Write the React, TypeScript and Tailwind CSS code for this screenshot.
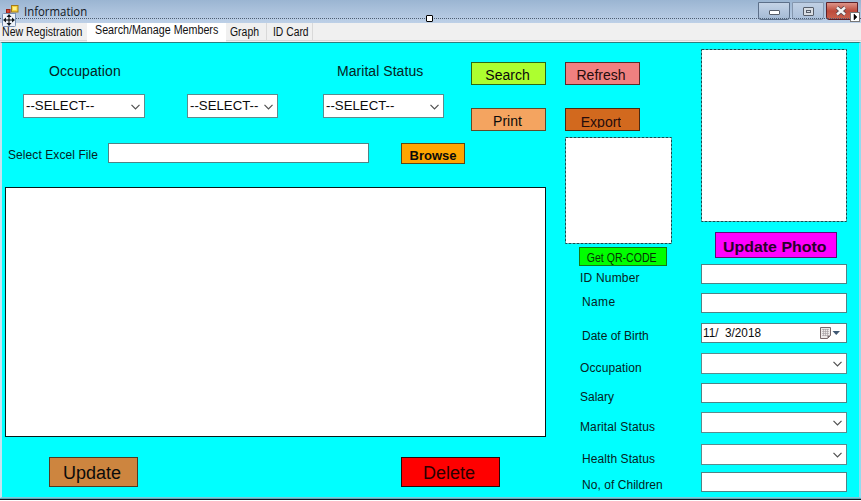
import React from "react";
import clsx from "clsx";

function Chevron({ className }: { className?: string }) {
  return (
    <svg className={clsx("h-[6px] w-[9px] shrink-0", className)} viewBox="0 0 9 6" fill="none" stroke="#505050" strokeWidth="1.2">
      <path d="M0.5 0.8 4.5 4.8 8.5 0.8" />
    </svg>
  );
}

function Combo({ text, className }: { text?: string; className: string }) {
  return (
    <div className={clsx("flex shrink-0 items-center justify-between border border-[#5b8c8e] bg-white", className)}>
      <span className="ml-[2px] w-0 origin-left scale-x-[0.98] text-[13.5px] leading-[20px] whitespace-nowrap">{text}</span>
      <Chevron className="mt-px mr-[4px]" />
    </div>
  );
}

function Button({ text, className, textClass }: { text: string; className: string; textClass?: string }) {
  return (
    <button className={clsx("flex shrink-0 items-center justify-center overflow-hidden border whitespace-nowrap", className)}>
      <span className={textClass}>{text}</span>
    </button>
  );
}

function Field({ className }: { className: string }) {
  return <input className={clsx("block shrink-0 border border-[#4f8486] bg-white outline-none", className)} />;
}

function Label({ text, className }: { text: string; className: string }) {
  return <span className={clsx("block h-[16px] shrink-0 leading-[16px] whitespace-nowrap text-[#062323]", className)}>{text}</span>;
}

function TitleBar() {
  return (
    <header className="relative flex h-[23px] shrink-0 bg-linear-to-b from-[#9bb5d2] to-[#bdd0e7]">
      <svg className="mt-[4px] ml-[5px] h-[14px] w-[14px]" viewBox="0 0 14 14">
        <rect x="6.5" y="1.5" width="6.5" height="6.5" fill="#f8d33c" stroke="#a47a16" />
        <rect x="8" y="3" width="3.5" height="3" fill="#fff08a" />
        <rect x="1.5" y="5.5" width="3.5" height="3.5" fill="#d8432f" stroke="#962217" />
        <rect x="6.5" y="9.5" width="4" height="4" fill="#7d9dd0" stroke="#6683b4" />
      </svg>
      <span className="mt-[4px] ml-[5px] block h-[16px] origin-left scale-x-[0.95] font-['Open_Sans',sans-serif] text-[12px] leading-[16px] text-[#10161e]">Information</span>
      <div className="mr-[3px] ml-auto flex h-[20px] gap-[2px] pt-[2px]">
        <div className="flex h-[18px] w-[32px] items-center justify-center rounded-b-[3px] border border-[#5c6f89] bg-linear-to-b from-[#c4d3e6] via-[#b3c6de] to-[#a4bad4]">
          <span className="mt-[3px] h-[5px] w-[11px] rounded-[1px] border border-[#565d69] bg-white" />
        </div>
        <div className="flex h-[18px] w-[32px] items-center justify-center rounded-b-[3px] border border-[#8597ae] bg-linear-to-b from-[#c0d0e4] to-[#abc0da]">
          <span className="flex h-[9px] w-[11px] items-center justify-center rounded-[1px] border border-[#565d69] bg-[#d8dde3]">
            <span className="h-[3px] w-[5px] border border-[#565d69]" />
          </span>
        </div>
        <div className="flex h-[18px] w-[32px] items-center justify-center rounded-b-[3px] border border-[#5e2027] bg-linear-to-b from-[#dc9489] via-[#bd4a3b] to-[#c9624f]">
          <svg className="mr-[2px] h-[10px] w-[12px]" viewBox="0 0 12 10">
            <path d="M2 1.5 10 8.5M10 1.5 2 8.5" stroke="#59454b" strokeWidth="4.2" />
            <path d="M2 1.5 10 8.5M10 1.5 2 8.5" stroke="#f4f4f4" strokeWidth="2.4" />
          </svg>
        </div>
      </div>
      <div className="absolute top-[18px] left-0 w-full border-t border-dotted border-[#4c5d72]" />
      <div className="absolute top-[15px] left-[426px] size-[7px] rounded-[1px] border border-black bg-white" />
      <svg className="absolute top-[13px] left-[2px] z-10 h-[14px] w-[14px]" viewBox="0 0 14 14">
        <rect x="0.5" y="0.5" width="13" height="13" rx="1" fill="#eef3fa" stroke="#7890b2" />
        <path d="M7 2v10M2 7h10" stroke="#000" />
        <path d="M7 1 4.5 4h5zM7 13 4.5 10h5zM1 7l3-2.5v5zM13 7l-3-2.5v5z" fill="#101820" />
      </svg>
      <svg className="absolute top-[12px] left-[850px] z-10 h-[10px] w-[10px]" viewBox="0 0 10 10">
        <rect x="0.5" y="0.5" width="9" height="9" fill="#fff" stroke="#777" />
        <path d="M4 2 7 5 4 8z" fill="#000" stroke="#000" strokeWidth="0.5" />
      </svg>
    </header>
  );
}

function Tabs() {
  return (
    <nav className="flex h-[19px] shrink-0 bg-[#f0f0f0] text-[12px] leading-[15px] whitespace-nowrap text-[#111]">
      <div className="h-[18px] w-[87px] border-b border-[#d9d9d9] pt-[2px] pl-[2px]">
        <span className="block w-0 origin-left scale-x-[0.88]">New Registration</span>
      </div>
      <div className="h-[19px] w-[139px] bg-white pl-[8px]">
        <span className="block w-0 origin-left scale-x-[0.893]">Search/Manage Members</span>
      </div>
      <div className="h-[18px] w-[41px] border-r border-b border-[#d9d9d9] pt-[2px] pl-[4px]">
        <span className="block w-0 origin-left scale-x-[0.87]">Graph</span>
      </div>
      <div className="h-[18px] w-[46px] border-r border-b border-[#d9d9d9] pt-[2px] pl-[6px]">
        <span className="block w-0 origin-left scale-x-[0.86]">ID Card</span>
      </div>
      <div className="h-[18px] flex-1 border-b border-[#d9d9d9]" />
    </nav>
  );
}

function DashedBox({ className, w, h }: { className: string; w: number; h: number }) {
  return (
    <svg className={clsx("block shrink-0", className)} viewBox={`0 0 ${w} ${h}`}>
      <rect x="0.5" y="0.5" width={w - 1} height={h - 1} fill="#fff" />
      <rect x="0.5" y="0.5" width={w - 1} height={h - 1} fill="none" stroke="#164c4e" strokeDasharray="3 1" />
    </svg>
  );
}

function SearchPanel() {
  return (
    <section className="flex w-[544px] shrink-0 flex-col">
      <div className="flex h-[100px]">
        <div className="w-[469px] pt-[20px]">
          <div className="flex h-[16px] text-[14px]">
            <Label text="Occupation" className="ml-[47px] w-[288px] tracking-[0.1px]" />
            <Label text="Marital Status" className="tracking-[0.05px]" />
          </div>
          <div className="mt-[15px] flex">
            <Combo text="--SELECT--" className="ml-[21px] h-[24px] w-[122px]" />
            <Combo text="--SELECT--" className="ml-[42px] h-[24px] w-[91px]" />
            <Combo text="--SELECT--" className="ml-[45px] h-[24px] w-[121px]" />
          </div>
        </div>
        <div className="flex flex-col gap-[23px] pt-[19px] text-[14px] leading-[16px]">
          <Button text="Search" className="h-[23px] w-[75px] border-[#2e6a14] bg-[#adff2f] pt-[3px] pr-[2px]" />
          <Button text="Print" className="h-[23px] w-[75px] border-[#5f4a2b] bg-[#f4a460] pt-[3px] pr-[2px]" />
        </div>
      </div>
      <div className="flex h-[44px]">
        <Label text="Select Excel File" className="mt-[4px] ml-[6px] w-[100px] text-[12px] tracking-[0.08px]" />
        <Field className="h-[20px] w-[261px]" />
        <Button text="Browse" className="ml-[32px] h-[21px] w-[64px] border-[#5d4813] bg-[#ffa500] pt-[4px] text-[13px] leading-[16px] font-bold" />
      </div>
      <div className="ml-[3px] h-[250px] w-[541px] shrink-0 border border-[#061b1b] bg-white" />
      <div className="mt-[20px] flex text-[18px] leading-[20px]">
        <Button text="Update" className="ml-[47px] h-[30px] w-[89px] border-[#4d3c24] bg-[#cd853f] pt-[2px] pr-[3px]" />
        <Button text="Delete" className="ml-[263px] h-[30px] w-[99px] border-[#2a0808] bg-[#ff0000] pt-[2px] pr-[3px] text-[#2a0000]" />
      </div>
    </section>
  );
}

function MiddleColumn() {
  return (
    <section className="ml-[19px] flex w-[107px] shrink-0 flex-col pt-[19px] text-[12px]">
      <Button text="Refresh" className="h-[23px] w-[75px] border-[#5a2b2b] bg-[#f08080] pt-[3px] pr-[3px] text-[14px] leading-[16px] text-[#260c0c]" />
      <Button text="Export" className="mt-[23px] h-[23px] w-[75px] border-[#4b2a10] bg-[#d2691e] pt-[3px] pr-[3px] text-[14px] leading-[16px] text-[#260c0c]" textClass="h-[14px] overflow-hidden" />
      <DashedBox className="mt-[6px] h-[107px] w-[107px]" w={107} h={107} />
      <Button text="Get QR-CODE" className="mt-[3px] ml-[14px] h-[19px] w-[88px] border-[#147a14] bg-[#00ff00] pt-[3px] pr-[2px] text-[12px] leading-[14px] text-[#063306]" textClass="scale-x-[0.88]" />
      <Label text="ID Number" className="mt-[4px] ml-[15px] tracking-[0.2px]" />
      <Label text="Name" className="mt-[8px] ml-[17px] tracking-[0.35px]" />
      <Label text="Date of Birth" className="mt-[18px] ml-[17px]" />
      <Label text="Occupation" className="mt-[16px] ml-[15px] tracking-[0.1px]" />
      <Label text="Salary" className="mt-[13px] ml-[15px]" />
      <Label text="Marital Status" className="mt-[14px] ml-[15px] tracking-[0.12px]" />
      <Label text="Health Status" className="mt-[16px] ml-[17px] tracking-[0.08px]" />
      <Label text="No, of Children" className="mt-[10px] ml-[17px] tracking-[0.05px]" />
    </section>
  );
}

function DatePicker() {
  return (
    <div className="mt-[10px] flex h-[20px] w-[146px] shrink-0 items-center border border-[#4f8486] bg-white">
      <span className="ml-px w-[117px] text-[12px] leading-[16px] whitespace-pre">
        <span className="inline-block origin-left scale-x-[0.98]">{"11/  3/2018"}</span>
      </span>
      <svg className="h-[12px] w-[22px]" viewBox="0 0 22 12">
        <path d="M0.5 0.5h10v8l-3 3h-7z" fill="#eee9e9" stroke="#77696b" />
        <path d="M2 2.5h7M2 4.5h7M2 6.5h7M2 8.5h5M3.5 2v7M5.5 2v7M7.5 2v7" stroke="#a29ca0" strokeWidth="0.6" />
        <path d="M10.5 8.5h-3v3z" fill="#77696b" />
        <path d="M12.5 4h7.5l-3.75 4z" fill="#3f5873" />
      </svg>
    </div>
  );
}

function DetailsColumn() {
  return (
    <section className="ml-[29px] flex w-[146px] shrink-0 flex-col pt-[6px]">
      <DashedBox className="h-[173px] w-[146px]" w={146} h={173} />
      <Button text="Update Photo" className="mt-[10px] ml-[14px] h-[26px] w-[122px] border-[#5a0f78] bg-[#ff00ff] pt-[3px] pr-[2px] text-[15px] leading-[18px] font-bold text-[#2b002b]" textClass="scale-x-[1.06]" />
      <Field className="mt-[6px] h-[20px] w-[146px]" />
      <Field className="mt-[9px] h-[20px] w-[146px]" />
      <DatePicker />
      <Combo className="mt-[10px] h-[21px] w-[146px]" />
      <Field className="mt-[9px] h-[20px] w-[146px]" />
      <Combo className="mt-[9px] h-[21px] w-[146px]" />
      <Combo className="mt-[11px] h-[21px] w-[146px]" />
      <Field className="mt-[7px] h-[20px] w-[146px]" />
    </section>
  );
}

export default function App() {
  return (
    <div className="flex h-[501px] w-[861px] flex-col overflow-hidden bg-white font-['Liberation_Sans',Arial,sans-serif] text-[#0b0b0b]">
      <TitleBar />
      <Tabs />
      <main className="flex h-[456px] shrink-0 border-t border-r-2 border-b border-l-2 border-t-[#2d7f80] border-r-[#8fdcf0] border-b-[#7fc8da] border-l-[#c5e4f0] bg-[#00ffff]">
        <SearchPanel />
        <MiddleColumn />
        <DetailsColumn />
      </main>
      <div className="h-[2px] border-t border-[#5aa9b5] bg-[#06141c]" />
      <div className="h-px bg-white" />
    </div>
  );
}
